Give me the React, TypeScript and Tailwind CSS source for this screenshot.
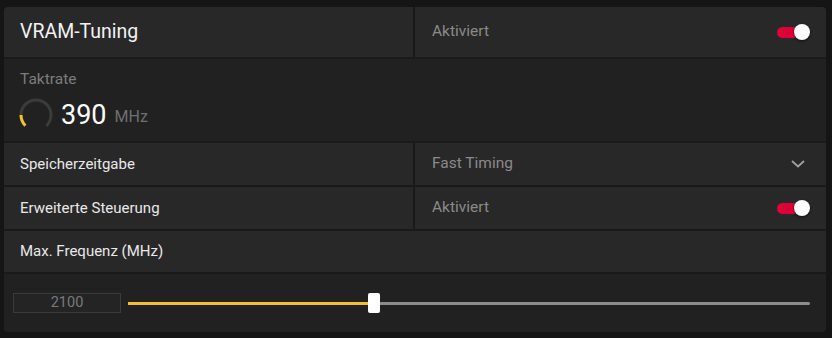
import React from 'react';

const font = { fontFamily: 'Roboto, "Noto Sans", sans-serif' };

const Toggle = () => (
    <div className="relative w-[33px] h-[16px] flex items-center">
        <div className="h-[11px] w-[26px] rounded-full bg-[#dc0036]" />
        <div className="absolute right-0 top-0 w-[16px] h-[16px] rounded-full bg-white shadow-[0_1px_3px_rgba(0,0,0,0.6)]" />
    </div>
);

const Gauge = () => {
    const c = 2 * Math.PI * 15;
    return (
        <svg width="36" height="36" viewBox="0 0 36 36">
            <circle
                cx="18"
                cy="18"
                r="15"
                fill="none"
                stroke="#3b3b3b"
                strokeWidth="3"
                strokeDasharray={`${c * 0.75} ${c}`}
                transform="rotate(135 18 18)"
            />
            <circle
                cx="18"
                cy="18"
                r="15"
                fill="none"
                stroke="#f4c02c"
                strokeWidth="3"
                strokeDasharray={`${c * 0.125} ${c}`}
                transform="rotate(135 18 18)"
            />
        </svg>
    );
};

const SplitRow = ({ label, right, big }: { label: string; right: React.ReactNode; big?: boolean }) => (
    <div className={`grid grid-cols-[409px_1fr] gap-[2px] ${big ? 'h-[50px]' : 'h-[42px]'}`}>
        <div className="bg-[#282828] flex items-center pl-4">
            <span className={big ? 'text-[19.5px] text-[#f2f2f2]' : 'text-[15px] text-[#e8e8e8]'}>{label}</span>
        </div>
        <div className="bg-[#282828] flex items-center justify-between pl-[17px] pr-4">{right}</div>
    </div>
);

export default function App() {
    return (
        <div className="min-h-screen bg-[#151515] pt-[7px] pl-[4px]" style={font}>
            <div className="w-[822px] rounded-[4px] overflow-hidden bg-[#1a1a1a] flex flex-col gap-[2px]">
                <SplitRow
                    big
                    label="VRAM-Tuning"
                    right={
                        <>
                            <span className="text-[15.5px] text-[#8a8a8a]">Aktiviert</span>
                            <Toggle />
                        </>
                    }
                />

                <div className="h-[82px] bg-[#212121] pl-4 pt-[9px]">
                    <div className="text-[15.5px] text-[#7c7c7c]">Taktrate</div>
                    <div className="flex items-center mt-[6px] -ml-[2px]">
                        <Gauge />
                        <span className="ml-[7px] text-[27px] leading-none text-white">390</span>
                        <span className="ml-[8px] text-[16px] text-[#6f6f6f] mt-[4px]">MHz</span>
                    </div>
                </div>

                <SplitRow
                    label="Speicherzeitgabe"
                    right={
                        <>
                            <span className="text-[15.5px] text-[#8a8a8a]">Fast Timing</span>
                            <svg width="16" height="16" viewBox="0 0 16 16" className="mr-[4px]">
                                <path d="M2 5 L8 10.5 L14 5" fill="none" stroke="#a0a0a0" strokeWidth="1.8" />
                            </svg>
                        </>
                    }
                />

                <SplitRow
                    label="Erweiterte Steuerung"
                    right={
                        <>
                            <span className="text-[15.5px] text-[#8a8a8a]">Aktiviert</span>
                            <Toggle />
                        </>
                    }
                />

                <div className="h-[41px] bg-[#282828] flex items-center pl-4">
                    <span className="text-[15px] text-[#e8e8e8]">Max. Frequenz (MHz)</span>
                </div>

                <div className="h-[58px] bg-[#212121] flex items-start pt-[19px] pl-[9px] pr-4">
                    <div className="w-[108px] h-[20px] border border-[#3a3a3a] bg-[#242424] flex items-center justify-center text-[14.5px] text-[#7a7a7a]">
                        2100
                    </div>
                    <div className="relative ml-[7px] flex-1 h-[20px] flex items-center">
                        <div className="h-[3px] w-[242px] bg-[#f4c02c]" />
                        <div className="h-[3px] flex-1 bg-[#8c8c8c] rounded-r-full" />
                        <div className="absolute left-[240px] top-0 w-[12px] h-[20px] rounded-[2px] bg-white" />
                    </div>
                </div>
            </div>
        </div>
    );
}
